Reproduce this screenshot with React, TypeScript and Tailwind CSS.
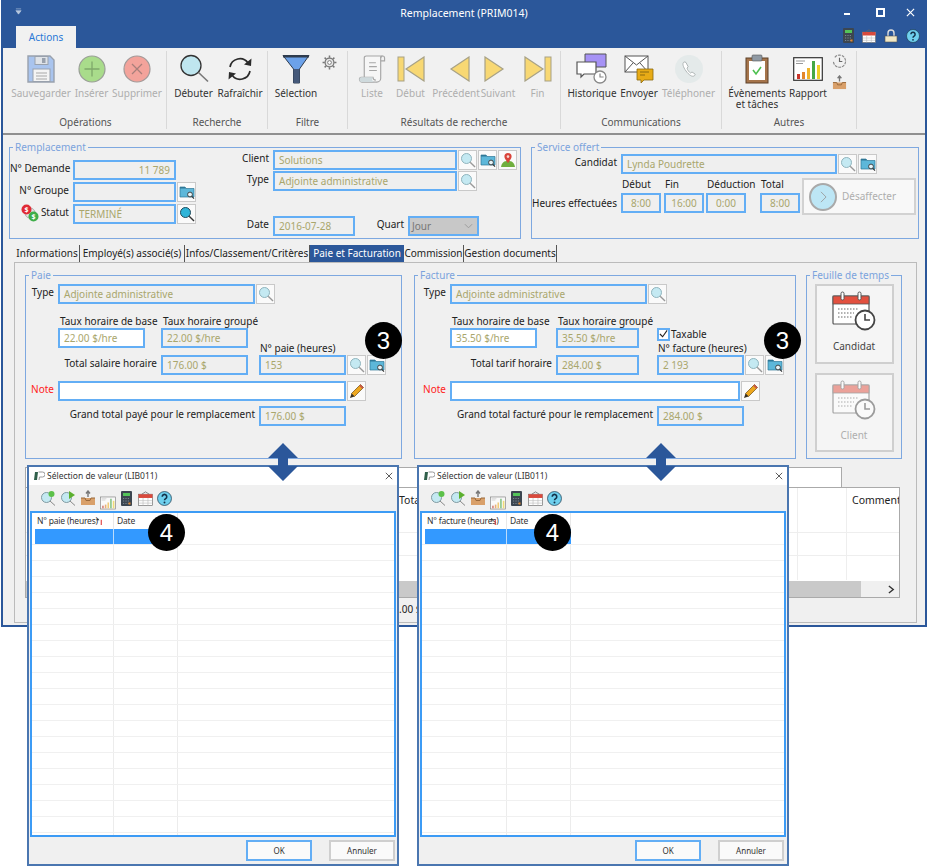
import type { ReactNode } from "react";
import clsx from "clsx";

/* ---------- icons ---------- */

const Lens = ({ dark = false, className = "w-[16px] h-[16px]" }: { dark?: boolean; className?: string }) => (
  <svg viewBox="0 0 16 16" className={className}>
    <circle cx="6.5" cy="6.5" r="5" fill={dark ? "#2fb4d8" : "#c4e9f2"} stroke={dark ? "#1d4a5c" : "#8fb4bd"} strokeWidth="1" />
    <path d="M10.2 10.2 15 15" stroke={dark ? "#333" : "#999"} strokeWidth="1.4" />
  </svg>
);

const FolderLens = () => (
  <svg viewBox="0 0 16 16" className="w-[16px] h-[16px]">
    <path d="M1 3h5l1 1.5h8V13H1z" fill="#5db7d9" stroke="#2f7796" strokeWidth=".7" />
    <path d="M1 3h5l1 1.5H1z" fill="#2f7796" />
    <circle cx="11" cy="10.5" r="2.4" fill="#e8f5f9" stroke="#333" strokeWidth=".9" />
    <path d="m12.8 12.4 2.2 2.2" stroke="#333" strokeWidth="1.1" />
  </svg>
);

const MapPin = () => (
  <svg viewBox="0 0 16 16" className="w-[16px] h-[16px]">
    <path d="M1 15c1-5 3-6 7-6s6 1 7 6z" fill="#6fae3e" />
    <path d="M8 1a3.6 3.6 0 0 0-3.6 3.6C4.4 7 8 11 8 11s3.6-4 3.6-6.4A3.6 3.6 0 0 0 8 1z" fill="#d9443a" />
    <circle cx="8" cy="4.6" r="1.3" fill="#f7d7d3" />
  </svg>
);

const Pencil = () => (
  <svg viewBox="0 0 16 16" className="w-[16px] h-[16px]">
    <path d="m11.5 1.5 3 3L5.5 13.5l-3-3z" fill="#eda71f" stroke="#6b4a10" strokeWidth=".7" />
    <path d="m2.5 10.5 3 3L1 15z" fill="#3a3020" />
    <path d="m11.5 1.5 3 3-1.3 1.3-3-3z" fill="#c9564a" />
  </svg>
);

const Floppy = () => (
  <svg viewBox="0 0 28 28" className="w-[28px] h-[28px]">
    <path d="M1 1h22l4 4v22H1z" fill="#a9c4ee" stroke="#99a1ad" strokeWidth="1.4" />
    <rect x="8" y="1.5" width="13" height="8" fill="#dfe3e8" stroke="#99a1ad" />
    <rect x="15" y="3" width="3.5" height="5" fill="#99a1ad" />
    <rect x="6" y="14" width="17" height="12.5" fill="#f4f4f4" stroke="#99a1ad" />
    <path d="M9 18h11M9 21h11M9 24h11" stroke="#a8a8a8" />
  </svg>
);

const RoundPlus = () => (
  <svg viewBox="0 0 28 28" className="w-[28px] h-[28px]">
    <circle cx="14" cy="14" r="13" fill="#a9dc8b" stroke="#9a9f97" strokeWidth="1.2" />
    <path d="M14 6.5v15M6.5 14h15" stroke="#7fa86b" strokeWidth="1.3" />
  </svg>
);

const RoundX = () => (
  <svg viewBox="0 0 28 28" className="w-[28px] h-[28px]">
    <circle cx="14" cy="14" r="13" fill="#f3a39b" stroke="#a29a99" strokeWidth="1.2" />
    <path d="m9 9 10 10M19 9 9 19" stroke="#a87f7b" strokeWidth="1.3" />
  </svg>
);

const BigLens = () => (
  <svg viewBox="0 0 30 30" className="w-[30px] h-[30px]">
    <circle cx="12" cy="11.5" r="10" fill="#bfe6ef" stroke="#333" strokeWidth="1.3" />
    <path d="m19.5 18.5 9.5 9" stroke="#777" strokeWidth="1.6" />
  </svg>
);

const Refresh = () => (
  <svg viewBox="0 0 26 26" fill="none" className="w-[26px] h-[26px]">
    <path d="M3 11A10 10 0 0 1 21 7" stroke="#2b2b2b" strokeWidth="1.7" />
    <path d="M23 15A10 10 0 0 1 5 19" stroke="#2b2b2b" strokeWidth="1.7" />
    <path d="m24.5 2.5-.5 7.5-7-1.5z" fill="#2b2b2b" />
    <path d="m1.5 23.5.5-7.5 7 1.5z" fill="#2b2b2b" />
  </svg>
);

const Funnel = () => (
  <svg viewBox="0 0 28 30" className="w-[28px] h-[30px]">
    <path d="M1 1.5h26L17.5 15v14h-6V15z" fill="#6ca2ea" stroke="#2f3c4e" strokeWidth="1" />
    <path d="M1 1h26v2.5H1z" fill="#2f3c4e" />
    <path d="M11.5 15h6v14h-6z" fill="#45597a" />
  </svg>
);

const Gear = () => (
  <svg viewBox="0 0 16 16" fill="none" className="w-[15px] h-[15px]">
    <circle cx="8" cy="8" r="4.7" stroke="#777" strokeWidth="1.3" fill="#e6e6e6" />
    <circle cx="8" cy="8" r="2" stroke="#777" strokeWidth="1" fill="#fff" />
    <path d="M8 .6v2.4M8 13v2.4M.6 8H3M13 8h2.4M2.8 2.8 4.5 4.5M11.5 11.5l1.7 1.7M13.2 2.8l-1.7 1.7M4.5 11.5l-1.7 1.7" stroke="#777" strokeWidth="1.6" />
  </svg>
);

const Scroll = () => (
  <svg viewBox="0 0 28 30" fill="none" className="w-[28px] h-[29px]">
    <path d="M6 23V3a2 2 0 0 1 2-2h17a2 2 0 0 0-2 2v21a4 4 0 0 1-4 4H4a3 3 0 0 1-3-3 2 2 0 0 1 2-2h12a3 3 0 0 0 3 3" fill="#f6f6f6" stroke="#a6a6a6" strokeWidth="1.2" />
    <path d="M23 3a2 2 0 0 1 4 0v3h-4M11 8h7M11 12h8M11 16h8" stroke="#a6a6a6" strokeWidth="1.2" />
    <path d="M1 25a3 3 0 0 0 3 3h14a3 3 0 0 1-3-5H3a2 2 0 0 0-2 2z" fill="#cfdadd" />
  </svg>
);

const NavTri = ({ dir, bar = false }: { dir: "l" | "r"; bar?: boolean }) => (
  <svg viewBox="0 0 28 26" className="w-[28px] h-[26px]">
    {dir === "l" ? (
      <>
        {bar && <rect x="1" y="1" width="6" height="24" fill="#f8d873" stroke="#a7a186" />}
        <path d="M27 1v24L9 13z" fill="#f8d873" stroke="#a7a186" strokeWidth="1.2" />
      </>
    ) : (
      <>
        {bar && <rect x="21" y="1" width="6" height="24" fill="#f8d873" stroke="#a7a186" />}
        <path d="M1 1v24l18-12z" fill="#f8d873" stroke="#a7a186" strokeWidth="1.2" />
      </>
    )}
  </svg>
);

const MiniClock = ({ x, y, r, color = "#888" }: { x: number; y: number; r: number; color?: string }) => (
  <g>
    <circle cx={x} cy={y} r={r} fill="#fff" stroke={color} strokeWidth="1.3" />
    <path d={`M${x} ${y - r * 0.6}V${y}H${x + r * 0.6}`} fill="none" stroke={color} strokeWidth="1.2" />
  </g>
);

const Chat = () => (
  <svg viewBox="0 0 32 32" className="w-[32px] h-[32px]">
    <path d="M9 1h21v13H18l-3 3v-3H9z" fill="#a692f5" stroke="#555" strokeWidth="1" />
    <path d="M1 9h19v12H8l-3 3v-3H1z" fill="#fff" stroke="#555" strokeWidth="1.2" />
    <MiniClock x={24} y={24} r={6} />
  </svg>
);

const Mail = () => (
  <svg viewBox="0 0 30 30" className="w-[30px] h-[30px]">
    <rect x="1" y="2" width="23" height="16" fill="#fff" stroke="#555" />
    <path d="m1 2 11.5 9L24 2M1 18l8-9M24 18l-8-9" fill="none" stroke="#555" />
    <path d="M13 15h16v11h-9l-3 3v-3h-4z" fill="#e8ab16" stroke="#8a6a10" strokeWidth=".8" />
    <path d="M16 18h9M16 21h5" stroke="#8a6a10" strokeWidth="1.2" />
  </svg>
);

const Phone = () => (
  <svg viewBox="0 0 28 28" className="w-[28px] h-[28px]">
    <circle cx="14" cy="14" r="14" fill="#e4eaea" />
    <path d="M9 7c-2 1-1 5 2 9s6 6 8 5c1-.5 1.5-1.5 1-2l-3-2-1.5 1c-1-.3-3.500-3.500-3.500-5l1.200-1.200L11 7.500C10.500 7 9.500 6.800 9 7z" fill="#fff" stroke="#a9b0b0" strokeWidth=".9" />
  </svg>
);

const Clipboard = () => (
  <svg viewBox="0 0 24 30" className="w-[24px] h-[30px]">
    <rect x="1" y="4" width="22" height="25" fill="#a5744b" stroke="#5d4028" />
    <rect x="4" y="7" width="16" height="19" fill="#fff" />
    <rect x="7" y="1" width="10" height="6" rx="1" fill="#8f99a3" stroke="#555" strokeWidth=".6" />
    <path d="m8 16 3 4 5-7" fill="none" stroke="#4dc04f" strokeWidth="1.6" />
  </svg>
);

const Chart = () => (
  <svg viewBox="0 0 30 24" className="w-[30px] h-[24px]">
    <rect x=".7" y=".7" width="28.600" height="22.600" fill="#fff" stroke="#333" strokeWidth="1.2" />
    <path d="M3 4h9M3 6.500h7" stroke="#999" />
    <rect x="4" y="17" width="3" height="5" fill="#c9352b" />
    <rect x="9" y="15" width="3" height="7" fill="#e3872a" />
    <rect x="14" y="11" width="3" height="11" fill="#f0b429" />
    <rect x="19" y="4" width="3" height="18" fill="#46a845" />
    <rect x="24" y="8" width="3" height="14" fill="#f0cf29" />
  </svg>
);

const History = () => (
  <svg viewBox="0 0 16 16" fill="none" className="w-[15px] h-[15px]">
    <path d="M3 3.500A6.500 6.500 0 1 1 1.500 8" stroke="#888" strokeWidth="1.2" strokeDasharray="3 1" />
    <path d="M8 4v4h3" stroke="#666" strokeWidth="1.2" />
  </svg>
);

const Tray = ({ className = "w-[15px] h-[15px]" }: { className?: string }) => (
  <svg viewBox="0 0 16 16" className={className}>
    <path d="M1 8h14v7H1z" fill="#d9a06a" />
    <path d="M1 8h4l1 2.500h4L11 8h4" fill="none" stroke="#9a6a3c" />
    <path d="M8 1v6M6 3.500 8 1l2 2.500" fill="none" stroke="#777" strokeWidth="1.4" />
  </svg>
);

const Calculator = ({ className = "w-[11px] h-[15px]" }: { className?: string }) => (
  <svg viewBox="0 0 11 15" className={className}>
    <rect width="11" height="15" rx="1" fill="#3c4650" />
    <rect x="2" y="2" width="7" height="3" fill="#54c45a" />
    <path d="M2 7.500h7M2 10h7M2 12.500h7" stroke="#7a858f" strokeDasharray="1.2 1.200" />
    <rect x="7.500" y="11.500" width="2" height="2" fill="#e8862a" />
  </svg>
);

const Calendar = ({ className = "w-[14px] h-[14px]" }: { className?: string }) => (
  <svg viewBox="0 0 14 14" className={className}>
    <rect x=".5" y="3" width="13" height="10.500" fill="#fff" stroke="#666" strokeWidth=".6" />
    <rect x=".5" y="3" width="13" height="3.500" fill="#d94a3d" />
    <path d="M3.500 3 7 .8 10.500 3" fill="none" stroke="#666" strokeWidth=".7" />
    <path d="M1 9h12M1 11.300h12M4.700 6.500v7M9.300 6.500v7" stroke="#bbb" strokeWidth=".6" />
  </svg>
);

const Lock = () => (
  <svg viewBox="0 0 14 14" className="w-[14px] h-[14px]">
    <path d="M4 7V4a3 3 0 0 1 6 0v3" fill="none" stroke="#ddd" strokeWidth="1.400" />
    <rect x="1" y="7" width="12" height="6" fill="#f1e7c4" stroke="#555" strokeWidth=".6" />
  </svg>
);

const Help = ({ className = "w-[14px] h-[14px]" }: { className?: string }) => (
  <svg viewBox="0 0 14 14" className={className}>
    <circle cx="7" cy="7" r="6.500" fill="#6fd0ee" stroke="#1f3f55" strokeWidth=".7" />
    <path d="M4.900 5.300a2.100 2.100 0 1 1 3.200 1.800c-.8.500-1.100.8-1.100 1.600" fill="none" stroke="#14324a" strokeWidth="1.500" />
    <circle cx="7" cy="10.800" r=".9" fill="#14324a" />
  </svg>
);

const CalendarClock = ({ faded = false }: { faded?: boolean }) => (
  <svg viewBox="0 0 44 40" className={clsx("w-[44px] h-[40px]", faded && "opacity-50")}>
    <rect x="1" y="5" width="36" height="28" rx="1" fill="#fff" stroke="#555" strokeWidth="1.2" />
    <rect x="1" y="5" width="36" height="8" fill="#e2503f" stroke="#555" strokeWidth=".8" />
    <rect x="9" y="1" width="3" height="8" rx="1.500" fill="#fff" stroke="#555" />
    <rect x="26" y="1" width="3" height="8" rx="1.500" fill="#fff" stroke="#555" />
    <path d="M6 18h20M6 22h16M6 26h14" stroke="#999" strokeWidth="1.500" strokeDasharray="1.500 1.500" />
    <circle cx="33" cy="29" r="9.500" fill="#fff" stroke="#444" strokeWidth="1.800" />
    <path d="M33 23v6h5" fill="none" stroke="#444" strokeWidth="1.600" />
  </svg>
);

const StatusDollars = () => (
  <svg viewBox="0 0 18 18" className="w-[18px] h-[18px]">
    <circle cx="9" cy="9" r="5" fill="#e6e6e6" stroke="#aaa" />
    <circle cx="5.500" cy="5.500" r="5" fill="#e02b35" />
    <circle cx="12.500" cy="12.500" r="5" fill="#3fae49" />
    <text x="5.500" y="8" textAnchor="middle" fontSize="7" fill="#fff" fontWeight="700">$</text>
    <text x="12.500" y="15" textAnchor="middle" fontSize="7" fill="#fff" fontWeight="700">$</text>
  </svg>
);

const AppMark = () => (
  <svg viewBox="0 0 12 10" className="w-[12px] h-[10px]">
    <path d="M1 9 2 1h3L4 9z" fill="#2f5f4a" />
    <path d="M5.500 1h4a2.500 2.500 0 0 1 0 5H6.500L6 9" fill="none" stroke="#999" strokeWidth="1" />
  </svg>
);

const DoubleArrow = () => (
  <svg viewBox="0 0 30 38" className="w-[30px] h-[38px]">
    <path d="M15 0 30 15H20v8h10L15 38 0 23h10v-8H0z" fill="#2b579a" />
  </svg>
);

/* ---------- form bits ---------- */

const Field = ({ width, white, right, children }: { width: string; white?: boolean; right?: boolean; children?: ReactNode }) => (
  <div
    className={clsx(
      "h-[20px] border-2 border-[#63aef5] px-[4px] flex items-center text-[10px] text-[#a9a66c] whitespace-nowrap shrink-0",
      width,
      white ? "bg-white" : "bg-[#efefef]",
      right && "justify-end"
    )}
  >
    {children}
  </div>
);

const IconBtn = ({ children }: { children: ReactNode }) => (
  <div className="w-[19px] h-[20px] ml-px border border-[#c9c9c9] bg-[#fafafa] flex items-center justify-center shrink-0">
    {children}
  </div>
);

const Label = ({ width, red, children }: { width: string; red?: boolean; children: ReactNode }) => (
  <div className={clsx("pr-[4px] -mt-[3px] text-right whitespace-nowrap shrink-0", width, red ? "text-[#ff2020]" : "text-[#222]")}>
    {children}
  </div>
);

const Group = ({ title, className, children }: { title: string; className: string; children: ReactNode }) => (
  <div className={clsx("relative border border-[#7ea8e0] shrink-0", className)}>
    <span className="absolute -top-[8px] left-[3px] bg-[#f0f0f0] px-[2px] leading-[14px] text-[#7ba3dd]">{title}</span>
    {children}
  </div>
);

const Badge = ({ n, className }: { n: number; className: string }) => (
  <div className={clsx("absolute w-[37px] h-[37px] rounded-full bg-black text-white text-[24px] flex items-center justify-center font-['Liberation_Sans',sans-serif]", className)}>
    {n}
  </div>
);

/* ---------- ribbon ---------- */

const RibbonItem = ({ width, label, off, icon }: { width: string; label: ReactNode; off?: boolean; icon: ReactNode }) => (
  <div className={clsx("flex flex-col items-center shrink-0", width)}>
    <div className="h-[32px] flex items-center justify-center">{icon}</div>
    <div className={clsx("mt-[3px] text-center leading-[11px] whitespace-nowrap", off ? "text-[#aeaeae]" : "text-[#333]")}>{label}</div>
  </div>
);

const RibbonGroup = ({ width, title, padding, children }: { width: string; title: string; padding: string; children: ReactNode }) => (
  <div className={clsx("relative h-[78px] mt-[3px] border-r border-[#d9d9d9] shrink-0", width)}>
    <div className={clsx("flex pt-[2px]", padding)}>{children}</div>
    <div className="absolute bottom-[1px] inset-x-0 text-center text-[#555] leading-[12px]">{title}</div>
  </div>
);

const Ribbon = () => (
  <div className="h-[82px] bg-[#f1f1f1] flex pl-[2px]">
    <RibbonGroup width="w-[162px]" title="Opérations" padding="pl-[5px]">
      <RibbonItem width="w-[62px]" label="Sauvegarder" off icon={<Floppy />} />
      <RibbonItem width="w-[39px]" label="Insérer" off icon={<RoundPlus />} />
      <RibbonItem width="w-[52px]" label="Supprimer" off icon={<RoundX />} />
    </RibbonGroup>
    <RibbonGroup width="w-[101px]" title="Recherche" padding="pl-[2px]">
      <RibbonItem width="w-[49px]" label="Débuter" icon={<BigLens />} />
      <RibbonItem width="w-[44px]" label="Rafraîchir" icon={<Refresh />} />
    </RibbonGroup>
    <RibbonGroup width="w-[80px]" title="Filtre" padding="pl-[6px]">
      <RibbonItem width="w-[44px]" label="Sélection" icon={<Funnel />} />
      <div className="ml-[4px] mt-[2px]"><Gear /></div>
    </RibbonGroup>
    <RibbonGroup width="w-[213px]" title="Résultats de recherche" padding="pl-[7px]">
      <RibbonItem width="w-[34px]" label="Liste" off icon={<Scroll />} />
      <RibbonItem width="w-[43px]" label="Début" off icon={<NavTri dir="l" bar />} />
      <RibbonItem width="w-[48px]" label="Précédent" off icon={<NavTri dir="l" />} />
      <RibbonItem width="w-[36px]" label="Suivant" off icon={<NavTri dir="r" />} />
      <RibbonItem width="w-[43px]" label="Fin" off icon={<NavTri dir="r" bar />} />
    </RibbonGroup>
    <RibbonGroup width="w-[161px]" title="Communications" padding="pl-[5px]">
      <RibbonItem width="w-[52px]" label="Historique" icon={<Chat />} />
      <RibbonItem width="w-[42px]" label="Envoyer" icon={<Mail />} />
      <RibbonItem width="w-[57px]" label="Téléphoner" off icon={<Phone />} />
    </RibbonGroup>
    <RibbonGroup width="w-[135px]" title="Autres" padding="pl-[5px]">
      <RibbonItem width="w-[60px]" label={<>Évènements<br />et tâches</>} icon={<Clipboard />} />
      <RibbonItem width="w-[42px]" label="Rapport" icon={<Chart />} />
      <div className="ml-[3px] mt-[1px] flex flex-col gap-[6px]"><History /><Tray /></div>
    </RibbonGroup>
  </div>
);

/* ---------- header panels ---------- */

const Remplacement = () => (
  <Group title="Remplacement" className="w-[512px] h-[92px] flex">
    <div className="w-[187px] pt-[12px] flex flex-col gap-[2px] shrink-0">
      <div className="flex items-center">
        <Label width="w-[63px]">N° Demande</Label>
        <Field width="w-[103px]" right>11 789</Field>
      </div>
      <div className="flex items-center">
        <Label width="w-[63px]">N° Groupe</Label>
        <Field width="w-[103px]" />
        <IconBtn><FolderLens /></IconBtn>
      </div>
      <div className="flex items-center">
        <div className="w-[63px] -mt-[3px] flex items-center justify-end gap-[2px] pr-[4px] shrink-0 text-[#222]">
          <StatusDollars />
          <span>Statut</span>
        </div>
        <Field width="w-[103px]">TERMINÉ</Field>
        <IconBtn><Lens dark /></IconBtn>
      </div>
    </div>
    <div className="ml-[33px] pt-[2px]">
      <div className="flex items-center">
        <Label width="w-[43px]">Client</Label>
        <Field width="w-[184px]">Solutions</Field>
        <IconBtn><Lens /></IconBtn>
        <IconBtn><FolderLens /></IconBtn>
        <IconBtn><MapPin /></IconBtn>
      </div>
      <div className="flex items-center mt-px">
        <Label width="w-[43px]">Type</Label>
        <Field width="w-[184px]">Adjointe administrative</Field>
        <IconBtn><Lens /></IconBtn>
      </div>
      <div className="flex items-center mt-[25px]">
        <Label width="w-[43px]">Date</Label>
        <Field width="w-[82px]">2016-07-28</Field>
        <Label width="w-[53px]">Quart</Label>
        <div className="w-[71px] h-[20px] border-2 border-[#63aef5] bg-[#c8c8c8] pl-[2px] pr-[4px] flex items-center justify-between text-[#777]">
          <span>Jour</span>
          <svg viewBox="0 0 10 6" fill="none" className="w-[9px] h-[6px]"><path d="m1 1 4 4 4-4" stroke="#999" /></svg>
        </div>
      </div>
    </div>
  </Group>
);

const HoursCol = ({ title, value, className }: { title: string; value: string; className?: string }) => (
  <div className={clsx("w-[40px] shrink-0", className)}>
    <div className="h-[16px] leading-[14px] pl-px text-[#222] whitespace-nowrap">{title}</div>
    <Field width="w-[40px]"><span className="w-full text-center">{value}</span></Field>
  </div>
);

const ServiceOffert = () => (
  <Group title="Service offert" className="w-[388px] h-[92px]">
    <div className="flex items-center pt-[6px]">
      <Label width="w-[89px]">Candidat</Label>
      <Field width="w-[216px]">Lynda Poudrette</Field>
      <IconBtn><Lens /></IconBtn>
      <IconBtn><FolderLens /></IconBtn>
    </div>
    <div className="flex mt-[3px]">
      <div className="w-[89px] pr-[4px] pt-[19px] text-right whitespace-nowrap text-[#222] shrink-0">Heures effectuées</div>
      <HoursCol title="Début" value="8:00" />
      <HoursCol title="Fin" value="16:00" className="ml-[3px]" />
      <HoursCol title="Déduction" value="0:00" className="ml-[2px]" />
      <HoursCol title="Total" value="8:00" className="ml-[14px]" />
      <div className="ml-[2px] w-[114px] h-[37px] mt-px border-2 border-[#d2d2d2] bg-[#f8f8f8] flex items-center pl-[5px] gap-[5px] text-[#aeaeae] shrink-0">
        <div className="w-[28px] h-[28px] rounded-full bg-[#bde6f5] border-2 border-[#a9a9a9] flex items-center justify-center">
          <svg viewBox="0 0 8 14" fill="none" className="w-[7px] h-[12px]"><path d="m1 1 6 6-6 6" stroke="#999" /></svg>
        </div>
        <span>Désaffecter</span>
      </div>
    </div>
  </Group>
);

const tabs = [
  { label: "Informations", width: "w-[65px]" },
  { label: "Employé(s) associé(s)", width: "w-[105px]" },
  { label: "Infos/Classement/Critères", width: "w-[125px]" },
  { label: "Paie et Facturation", width: "w-[94px]", active: true },
  { label: "Commission", width: "w-[60px]" },
  { label: "Gestion documents", width: "w-[93px]" },
];

const Tabs = () => (
  <div className="flex pl-[12px] mt-[6px] h-[17px]">
    {tabs.map((t) => (
      <div
        key={t.label}
        className={clsx(
          "flex items-center justify-center whitespace-nowrap shrink-0",
          t.width,
          t.active ? "bg-[#2b579a] text-white" : "border-r border-[#555] text-[#222]"
        )}
      >
        {t.label}
      </div>
    ))}
  </div>
);

/* ---------- pay panels ---------- */

const Billing = ({
  title, groupWidth, labelWidth, col2Gap, col2Width, col3Gap, noteWidth, grandWidth, totalLabelWidth, rate, total, noLabel, noValue, totalLabel, grandLabel, grand, taxable,
}: {
  title: string; groupWidth: string; labelWidth: string; col2Gap: string; col2Width: string; col3Gap: string; noteWidth: string; grandWidth: string; totalLabelWidth: string;
  rate: string; total: string; noLabel: string; noValue: string; totalLabel: string; grandLabel: string; grand: string; taxable?: boolean;
}) => (
  <Group title={title} className={clsx("h-[184px] pt-[8px]", groupWidth)}>
    <div className="flex items-center">
      <Label width={labelWidth}>Type</Label>
      <Field width="w-[197px]">Adjointe administrative</Field>
      <IconBtn><Lens /></IconBtn>
    </div>
    <div className="flex mt-[11px]">
      <div className="shrink-0">
        <div className="flex">
          <div className={clsx("shrink-0", labelWidth)} />
          <div className="w-[87px] shrink-0">
            <div className="h-[13px] leading-[13px] pl-[2px] whitespace-nowrap text-[#222]">Taux horaire de base</div>
            <Field width="w-[87px]" white>{rate}</Field>
          </div>
          <div className={clsx("shrink-0", col2Gap, col2Width)}>
            <div className="h-[13px] leading-[13px] pl-[2px] whitespace-nowrap text-[#222]">Taux horaire groupé</div>
            <Field width={col2Width}>{rate}</Field>
          </div>
        </div>
        <div className="flex items-center mt-[7px]">
          <Label width={totalLabelWidth}>{totalLabel}</Label>
          <Field width={col2Width}>{total}</Field>
        </div>
      </div>
      <div className={clsx("flex flex-col justify-end shrink-0", col3Gap)}>
        {taxable && (
          <div className="flex items-center h-[14px] mb-px">
            <div className="w-[13px] h-[13px] border-2 border-[#63aef5] bg-white flex items-center justify-center">
              <svg viewBox="0 0 10 10" fill="none" className="w-[10px] h-[10px]"><path d="m1 5 3 3 5-7" stroke="#222" strokeWidth="1.200" /></svg>
            </div>
            <span className="ml-px text-[#222]">Taxable</span>
          </div>
        )}
        <div className="h-[13px] leading-[13px] pl-px whitespace-nowrap text-[#222]">{noLabel}</div>
        <div className="flex items-center">
          <Field width="w-[87px]">{noValue}</Field>
          <IconBtn><Lens /></IconBtn>
          <IconBtn><FolderLens /></IconBtn>
        </div>
      </div>
    </div>
    <div className="flex items-center mt-[6px]">
      <Label width={labelWidth} red>Note</Label>
      <Field width={noteWidth} white />
      <IconBtn><Pencil /></IconBtn>
    </div>
    <div className="flex items-center mt-[5px]">
      <Label width={grandWidth}>{grandLabel}</Label>
      <Field width="w-[87px]">{grand}</Field>
    </div>
  </Group>
);

const Timesheet = () => (
  <Group title="Feuille de temps" className="w-[96px] h-[184px] pt-[8px] flex flex-col items-center gap-[9px]">
    <div className="w-[79px] h-[80px] border-2 border-[#cfcfcf] bg-[#f5f5f5] flex flex-col items-center pt-[5px] text-[#444]">
      <CalendarClock />
      <span className="mt-[8px]">Candidat</span>
    </div>
    <div className="w-[79px] h-[79px] border-2 border-[#cfcfcf] bg-[#f5f5f5] flex flex-col items-center pt-[5px] text-[#aeaeae]">
      <CalendarClock faded />
      <span className="mt-[8px]">Client</span>
    </div>
  </Group>
);

/* ---------- grid behind the dialogs ---------- */

const BackGrid = () => (
  <div className="mt-[8px] ml-[10px]">
    <div className="w-[817px] h-[20px] bg-white border border-b-0 border-[#aaa]" />
    <div className="relative w-[875px] h-[111px] bg-white border border-[#aaa] text-[10.500px] text-[#222] overflow-hidden">
      <span className="absolute left-[373px] top-[5px]">Total</span>
      <span className="absolute left-[826px] top-[5px] whitespace-nowrap">Commentair</span>
      <div className="absolute left-0 right-0 top-[44px] border-t border-[#eee]" />
      <div className="absolute left-0 right-0 top-[67px] border-t border-[#eee]" />
      <div className="absolute top-0 bottom-[17px] left-[771px] border-l border-[#eee]" />
      <div className="absolute top-0 bottom-[17px] left-[820px] border-l border-[#eee]" />
      <div className="absolute left-0 right-0 bottom-0 h-[16px] bg-[#f0f0f0] flex items-center">
        <div className="w-[835px] h-full bg-[#c9c9c9]" />
        <svg viewBox="0 0 8 10" fill="none" className="ml-[27px] w-[7px] h-[9px]"><path d="m1 1 5 4-5 4" stroke="#333" strokeWidth="1.600" /></svg>
      </div>
    </div>
    <div className="pl-[374px] pt-[4px] leading-[14px] text-[#222]">.00 $</div>
  </div>
);

/* ---------- dialog ---------- */

const rows = Array.from({ length: 20 }, (_, i) => i);

const Picker = ({ className, heading, headWidth, col1, col2, okGap }: { className: string; heading: string; headWidth: string; col1: string; col2: string; okGap: string }) => (
  <div className={clsx("absolute top-[465px] w-[372px] h-[401px] bg-[#f0f0f0] border-2 border-[#4a76b0] flex flex-col", className)}>
    <div className="h-[18px] bg-white flex items-center pl-[4px] text-[8.500px] text-[#333] shrink-0">
      <AppMark />
      <span className="ml-[2px]">Sélection de valeur (LIB011)</span>
      <svg viewBox="0 0 10 10" fill="none" className="ml-auto mr-[4px] w-[8px] h-[8px]"><path d="m1 1 8 8M9 1 1 9" stroke="#333" /></svg>
    </div>
    <div className="h-[26px] flex items-center gap-[4px] pl-[11px] shrink-0">
      <svg viewBox="0 0 16 16" className="w-[16px] h-[16px]">
        <circle cx="6.500" cy="7.500" r="5" fill="#c4e9f2" stroke="#7f9aa2" /><path d="m10 11 5 4.500" stroke="#888" /><circle cx="11.500" cy="4" r="3" fill="#5cc14a" />
      </svg>
      <svg viewBox="0 0 16 16" className="w-[16px] h-[16px]">
        <circle cx="6.500" cy="7.500" r="5" fill="#c4e9f2" stroke="#7f9aa2" /><path d="m10 11 5 4.500" stroke="#888" /><path d="M9 1v8l6-4z" fill="#5cb02f" />
      </svg>
      <Tray className="w-[16px] h-[16px]" />
      <div className="opacity-60 w-[16px] h-[14px] flex"><Chart /></div>
      <Calculator className="ml-[1px] w-[11px] h-[15px]" />
      <Calendar className="ml-[2px] w-[15px] h-[15px]" />
      <Help className="w-[15px] h-[15px]" />
    </div>
    <div className="mx-px h-[326px] bg-white border-2 border-[#3c9bf5] overflow-hidden shrink-0 text-[8.500px] text-[#333] tracking-[-0.2px]">
      <div className="h-[16px] flex pl-[3px]">
        <div className={clsx("flex items-center pl-[2px] border-r border-[#e8e8e8] shrink-0", col1)}>
          <span className={clsx("whitespace-nowrap shrink-0", headWidth)}>{heading}</span>
          <svg viewBox="0 0 8 8" className="w-[7px] h-[7px]"><path d="M2 8V1M0 2.500 2 0l2 2.500z" fill="#333" /><path d="M6 8V2" stroke="#d33" strokeWidth="1.200" /></svg>
        </div>
        <div className={clsx("flex items-center pl-[3px] border-r border-[#e8e8e8] shrink-0", col2)}>Date</div>
      </div>
      {rows.map((i) => (
        <div key={i} className="h-[16px] flex pl-[3px] border-b border-[#f0f0f0]">
          <div className={clsx("border-r shrink-0", col1, i === 0 ? "bg-[#3399ff] border-[#bcdcfb]" : "border-[#ececec]")} />
          <div className={clsx("border-r shrink-0", col2, i === 0 ? "bg-[#3399ff] border-[#3399ff]" : "border-[#ececec]")} />
        </div>
      ))}
    </div>
    <div className={clsx("flex mt-[3px] text-[8px] text-[#333]", okGap)}>
      <div className="w-[66px] h-[21px] border-2 border-[#63aef5] bg-[#fafafa] flex items-center justify-center">OK</div>
      <div className="ml-[17px] w-[66px] h-[21px] border-2 border-[#cfcfcf] bg-[#fafafa] flex items-center justify-center">Annuler</div>
    </div>
  </div>
);

/* ---------- page ---------- */

export default function App() {
  return (
    <div className="relative w-[928px] h-[866px] overflow-hidden bg-white text-[10px] font-['Noto_Sans',sans-serif]">
      <div className="w-[926px] h-[627px] ml-px border-x-2 border-b-2 border-[#2b579a] bg-[#f0f0f0] overflow-hidden">
        <div className="relative h-[48px] bg-[#2b579a] text-white">
          <svg viewBox="0 0 8 8" className="absolute left-[12px] top-[8px] w-[7px] h-[7px]"><path d="M1 1h6M1 3h6L4 7z" fill="#b8c8de" stroke="#b8c8de" strokeWidth=".7" /></svg>
          <div className="pt-[6px] text-center text-[10.500px] leading-[14px]">Remplacement (PRIM014)</div>
          <div className="absolute left-[13px] bottom-0 w-[60px] h-[22px] bg-[#f1f1f1] text-[#2a78d6] flex items-center justify-center">Actions</div>
          <div className="absolute right-[10px] top-[8px] flex items-center gap-[21px]">
            <span className="w-[6px] h-[2px] bg-white mt-[2px] mr-[5px]" />
            <span className="w-[9px] h-[9px] border-2 border-white" />
            <svg viewBox="0 0 10 10" fill="none" className="w-[9px] h-[9px]"><path d="m1 1 8 8M9 1 1 9" stroke="#fff" strokeWidth="1.300" /></svg>
          </div>
          <div className="absolute right-[5px] top-[28px] flex items-center gap-[8px]">
            <Calculator />
            <Calendar />
            <Lock />
            <Help />
          </div>
        </div>
        <Ribbon />
        <div className="h-[2px] mt-[3px] bg-[#8f8f8f]" />
        <div className="flex gap-[10px] pl-[6px] mt-[12px]">
          <Remplacement />
          <ServiceOffert />
        </div>
        <Tabs />
        <div className="ml-[11px] w-[903px] h-[361px] border border-[#bbb] bg-[#f0f0f0]">
          <div className="flex pl-[10px] pt-[12px]">
            <Billing
              title="Paie" groupWidth="w-[377px]" labelWidth="w-[32px]" col2Gap="ml-[16px]" col2Width="w-[87px]" col3Gap="ml-[11px]"
              noteWidth="w-[288px]" grandWidth="w-[233px]" totalLabelWidth="w-[135px]" rate="22.00 $/hre" total="176.00 $"
              noLabel="N° paie (heures)" noValue="153" totalLabel="Total salaire horaire" grandLabel="Grand total payé pour le remplacement" grand="176.00 $"
            />
            <div className="w-[12px] shrink-0" />
            <Billing
              title="Facture" groupWidth="w-[382px]" labelWidth="w-[35px]" col2Gap="ml-[19px]" col2Width="w-[83px]" col3Gap="ml-[18px]"
              noteWidth="w-[290px]" grandWidth="w-[242px]" totalLabelWidth="w-[141px]" rate="35.50 $/hre" total="284.00 $"
              noLabel="N° facture (heures)" noValue="2 193" totalLabel="Total tarif horaire" grandLabel="Grand total facturé pour le remplacement" grand="284.00 $" taxable
            />
            <div className="w-[10px] shrink-0" />
            <Timesheet />
          </div>
          <BackGrid />
        </div>
      </div>

      <Picker className="left-[27px]" heading="N° paie (heures)" headWidth="w-[59px]" col1="w-[79px]" col2="w-[64px]" okGap="pl-[217px]" />
      <Picker className="left-[417px]" heading="N° facture (heures)" headWidth="w-[63px]" col1="w-[82px]" col2="w-[64px]" okGap="pl-[216px]" />

      <div className="absolute left-[268px] top-[443px]"><DoubleArrow /></div>
      <div className="absolute left-[646px] top-[443px]"><DoubleArrow /></div>
      <Badge n={3} className="left-[365px] top-[322px]" />
      <Badge n={3} className="left-[764px] top-[322px]" />
      <Badge n={4} className="left-[148px] top-[514px]" />
      <Badge n={4} className="left-[534px] top-[514px]" />
    </div>
  );
}
